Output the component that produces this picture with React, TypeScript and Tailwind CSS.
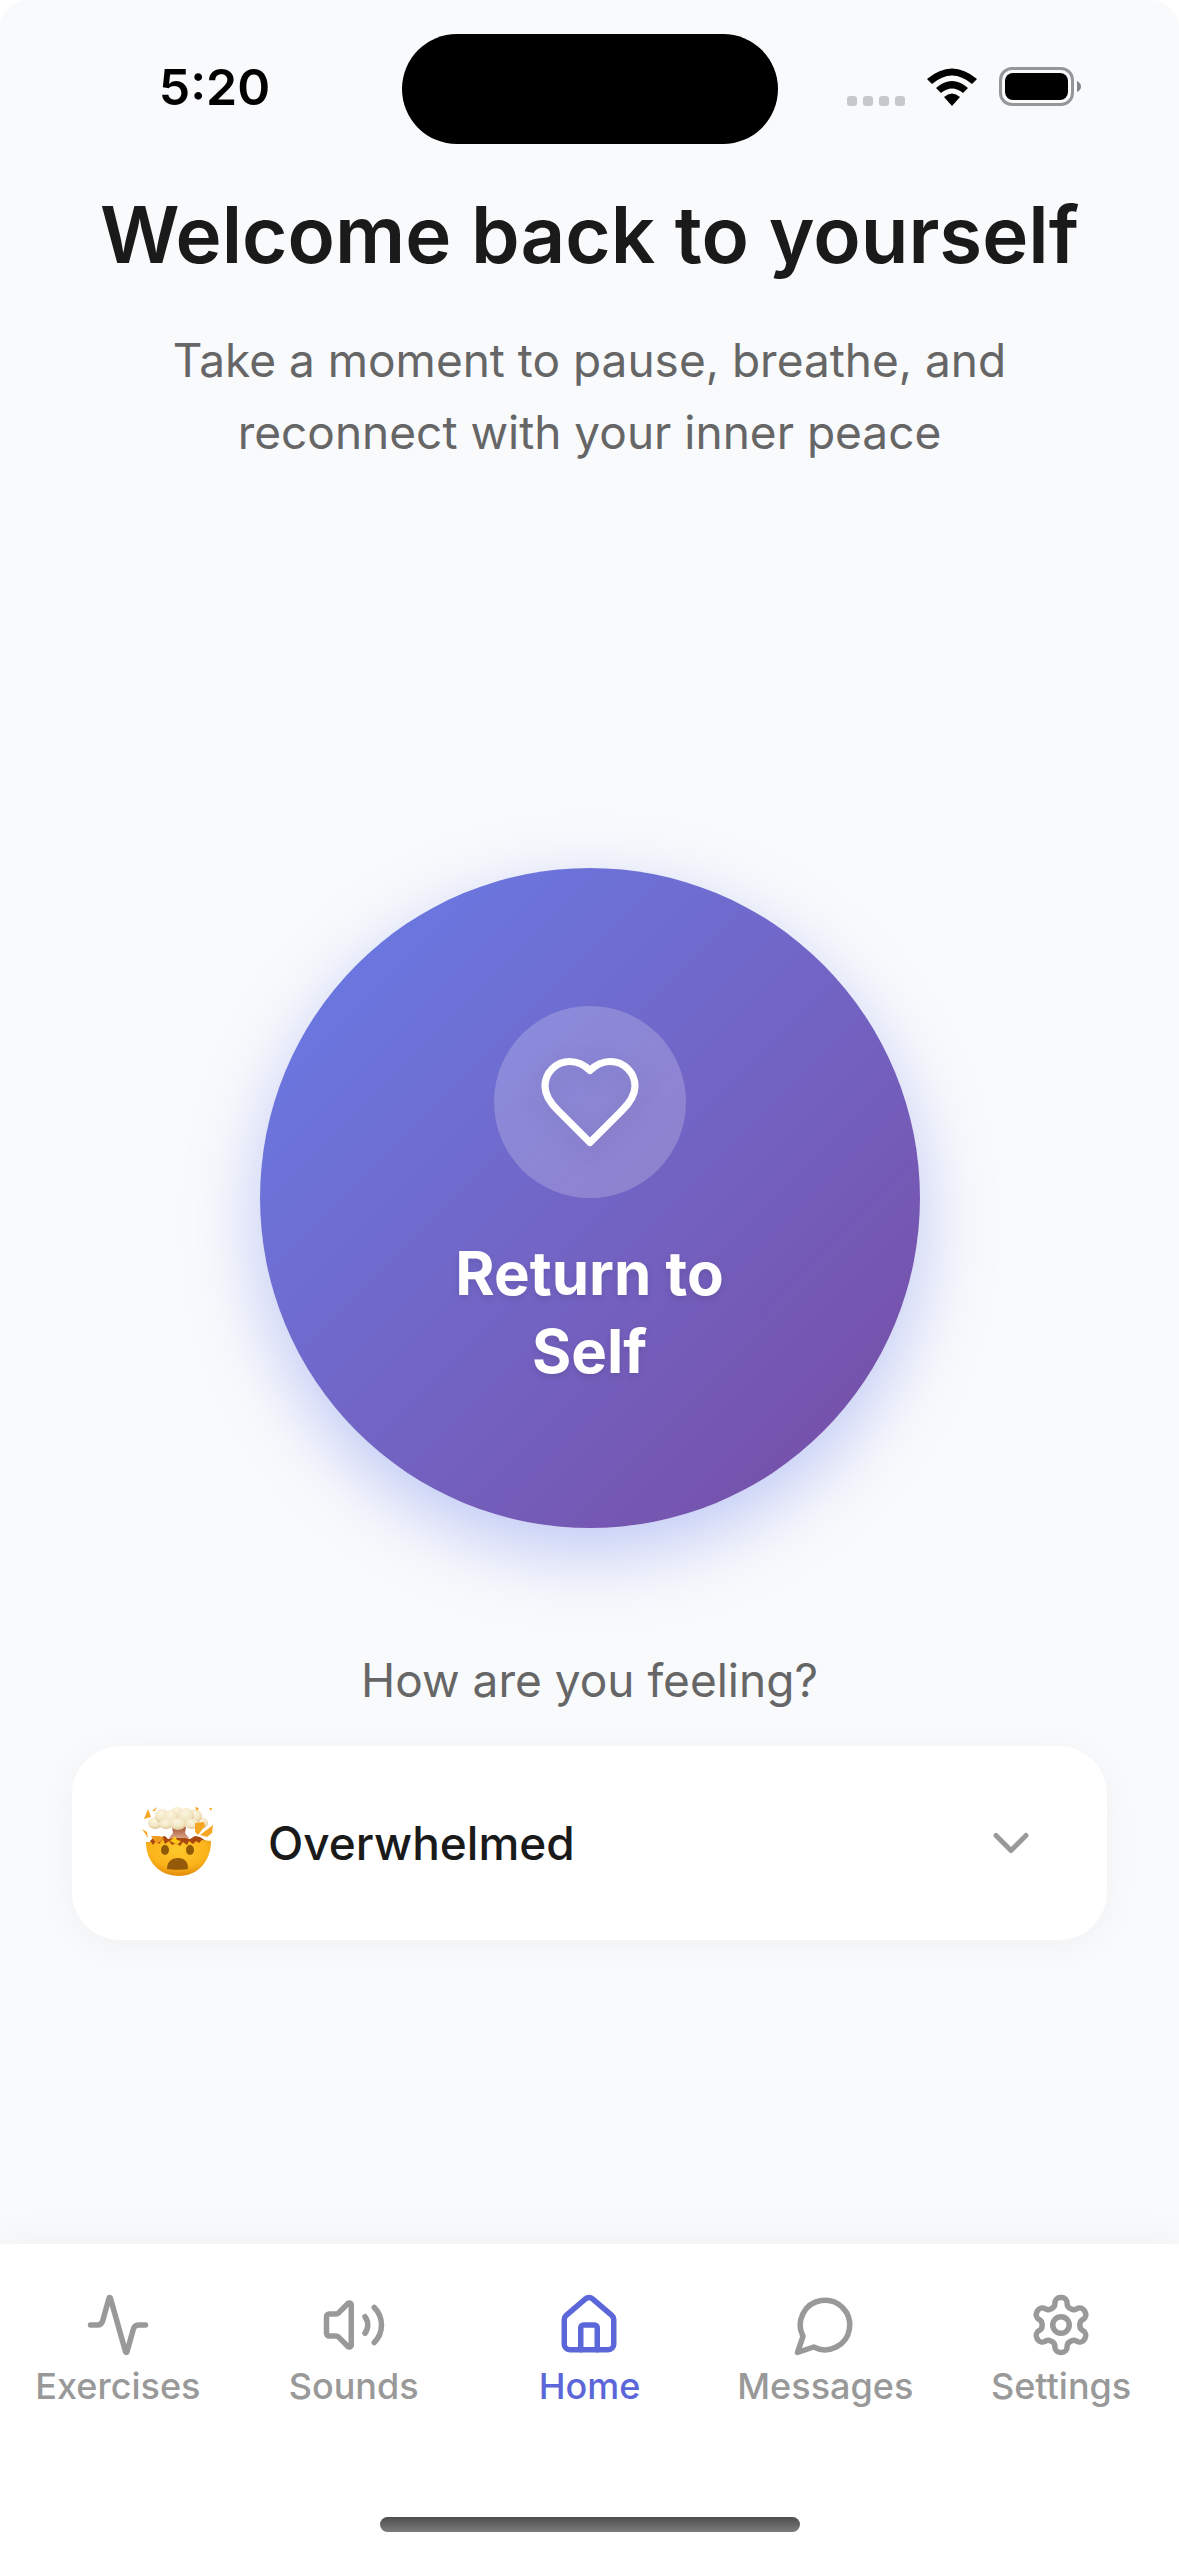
import { useState } from 'react';
import { Activity, ChevronDown, House, Volume2 } from 'lucide-react';

const strokeProps = {
  viewBox: '0 0 24 24',
  fill: 'none',
  stroke: 'currentColor',
  strokeLinecap: 'round',
  strokeLinejoin: 'round'
} as const;

const HeartIcon = () => (
  <svg {...strokeProps} strokeWidth="1.6" className="size-27 drop-shadow-[0_6px_12px_rgba(0,0,0,0.1)]" aria-hidden="true">
    <path d="M19 14c1.49-1.46 3-3.21 3-5.5A5.5 5.5 0 0 0 16.5 3c-1.76 0-3 .5-4.5 2-1.5-1.5-2.74-2-4.5-2A5.5 5.5 0 0 0 2 8.5c0 2.3 1.5 4.05 3 5.5l7 7Z" />
  </svg>
);

const MessageIcon = ({ className }: { className?: string }) => (
  <svg {...strokeProps} strokeWidth="2" className={className} aria-hidden="true">
    <path d="M7.9 20A9 9 0 1 0 4 16.1L2 22Z" />
  </svg>
);

const SettingsIcon = ({ className }: { className?: string }) => (
  <svg {...strokeProps} strokeWidth="2" className={className} aria-hidden="true">
    <path d="M12.22 2h-.44a2 2 0 0 0-2 2v.18a2 2 0 0 1-1 1.73l-.43.25a2 2 0 0 1-2 0l-.15-.08a2 2 0 0 0-2.73.73l-.22.38a2 2 0 0 0 .73 2.73l.15.1a2 2 0 0 1 1 1.72v.51a2 2 0 0 1-1 1.74l-.15.09a2 2 0 0 0-.73 2.73l.22.38a2 2 0 0 0 2.73.73l.15-.08a2 2 0 0 1 2 0l.43.25a2 2 0 0 1 1 1.73V20a2 2 0 0 0 2 2h.44a2 2 0 0 0 2-2v-.18a2 2 0 0 1 1-1.73l.43-.25a2 2 0 0 1 2 0l.15.08a2 2 0 0 0 2.73-.73l.22-.39a2 2 0 0 0-.73-2.73l-.15-.08a2 2 0 0 1-1-1.74v-.5a2 2 0 0 1 1-1.74l.15-.09a2 2 0 0 0 .73-2.73l-.22-.38a2 2 0 0 0-2.73-.73l-.15.08a2 2 0 0 1-2 0l-.43-.25a2 2 0 0 1-1-1.73V4a2 2 0 0 0-2-2z" />
    <circle cx="12" cy="12" r="3" />
  </svg>
);

const ExplodingHead = () => (
  <svg viewBox="0 0 72 72" className="size-18" aria-hidden="true">
    <defs>
      <radialGradient id="face" cx="0.5" cy="0.3" r="0.75">
        <stop offset="0" stopColor="#fdc92b" />
        <stop offset="0.6" stopColor="#fbb31a" />
        <stop offset="1" stopColor="#dd840a" />
      </radialGradient>
      <radialGradient id="puff" cx="0.45" cy="0.3" r="0.75">
        <stop offset="0" stopColor="#fcf6e2" />
        <stop offset="0.6" stopColor="#f2e6c2" />
        <stop offset="1" stopColor="#d9ba8a" />
      </radialGradient>
      <linearGradient id="stem" x1="0" y1="0" x2="0" y2="1">
        <stop offset="0" stopColor="#a85335" />
        <stop offset="1" stopColor="#d8a386" />
      </linearGradient>
    </defs>
    <path d="M30 20h14l-1 6 4 5H27l4-5z" fill="url(#stem)" />
    <path d="M8 34l5-5 6 1 4-1 3 3 4-1h14l4 1 5-3 5 1 6 4-3 5H10z" fill="#a9480f" />
    <path d="M4 35h5l2 3 3-4 3 3 4-5 2 5 4-3 3 4 4-2 4 3 3-4 4 3 2-4 4 3 3-3 3 2 3-3 9 1c0 20-13 35-32 35S4 55 4 35z" fill="url(#face)" />
    <path d="M9 29h8l5 2-4 4-4 1z" fill="#ef9b1d" />
    <path d="M33 29l2 4 4 1-3 3-4-1-4-2z" fill="#ffc61a" />
    <g fill="url(#puff)">
      <ellipse cx="13" cy="16" rx="7" ry="6" />
      <ellipse cx="59" cy="16" rx="7" ry="6" />
      <circle cx="20" cy="9" r="7" />
      <circle cx="53" cy="9" r="7" />
      <circle cx="35" cy="6" r="6" />
      <circle cx="29" cy="10" r="7" />
      <circle cx="44" cy="9" r="8" />
      <ellipse cx="24" cy="17" rx="7" ry="5" />
      <ellipse cx="50" cy="17" rx="7" ry="5" />
      <ellipse cx="36" cy="17" rx="8" ry="6" />
    </g>
    <g fill="#f5a623">
      <path d="M6 2l3 8-7 2z" />
      <path d="M10 4l5-4-2 4z" />
      <path d="M53 0l4 1-2 3z" />
      <path d="M67 1l3 0-1 3z" />
      <path d="M0 22l5 3 1 6z" />
      <path d="M53 16l9-1 1 4-7 9-3-3z" />
      <path d="M71 18l-1 8-5 4-7-2z" />
    </g>
    <ellipse cx="23" cy="43" rx="4" ry="5" fill="#8f5a06" />
    <ellipse cx="48" cy="43" rx="4" ry="5" fill="#8f5a06" />
    <path d="M25 62c0-7 4-11 11-11s10 4 10 11c-3 1-18 1-21 0z" fill="#95590a" />
  </svg>
);

const StatusBar = () => (
  <div className="grid grid-cols-3 items-center pt-[34px]">
    <div className="pb-1 pl-9 text-center text-[50px]/[60px] font-semibold text-black">5:20</div>
    <div className="mx-auto h-[110px] w-94 rounded-full bg-black" />
    <div className="flex items-center justify-end gap-[22px] pr-[98px] pb-1">
      <svg viewBox="0 0 58 40" className="h-10 w-[58px]" fill="#c7c8ca" aria-hidden="true">
        <rect x="0" y="29" width="10" height="10" rx="3" />
        <rect x="16" y="29" width="10" height="10" rx="3" />
        <rect x="32" y="29" width="10" height="10" rx="3" />
        <rect x="48" y="29" width="10" height="10" rx="3" />
      </svg>
      <svg viewBox="0 0 50 40" className="h-10 w-[50px]" aria-hidden="true">
        <path d="M0 12Q25 -9 50 12L45 17Q25 0 5 17Z" />
        <path d="M9 21Q25 7 41 21L36 26Q25 17 14 26Z" />
        <path d="M17 30Q25 23 33 30L25 39Z" />
      </svg>
      <svg viewBox="0 0 82 40" className="h-10 w-[82px]" aria-hidden="true">
        <rect x="1.5" y="1.5" width="72" height="36" rx="11.5" fill="none" stroke="#959697" strokeWidth="3" />
        <rect x="6" y="6" width="63" height="27" rx="8" />
        <path d="M78 14Q82 16 82 19.5T78 25Z" fill="#848586" />
      </svg>
    </div>
  </div>
);

const tabs = [
  { name: 'Exercises', Icon: Activity },
  { name: 'Sounds', Icon: Volume2 },
  { name: 'Home', Icon: House },
  { name: 'Messages', Icon: MessageIcon },
  { name: 'Settings', Icon: SettingsIcon }
];

const App = () => {
  const [activeTab, setActiveTab] = useState('Home');

  return (
    <div className="bg-white">
      <div className="flex min-h-screen flex-col rounded-t-[28px] bg-[#f9fafc] font-['Inter',sans-serif]">
        <StatusBar />

        <header className="px-18 pt-[42px] text-center">
          <h1 className="text-[78px]/[98px] font-semibold text-[#1a1a1a]">Welcome back to yourself</h1>
          <p className="mx-auto mt-10 max-w-[900px] text-[46px]/[72px] text-[#666666]">
            Take a moment to pause, breathe, and reconnect with your inner peace
          </p>
        </header>

        <main className="flex flex-1 flex-col items-center justify-center px-18 pt-24">
          <button className="flex size-[660px] flex-col items-center justify-center rounded-full bg-linear-135 from-[#667eea] to-[#764ba2] shadow-[0_24px_72px_rgba(102,126,234,0.4)] text-white">
            <span className="flex size-48 items-center justify-center rounded-full bg-white/20">
              <HeartIcon />
            </span>
            <span className="mt-9 w-80 text-[60px]/[78px] font-bold text-shadow-[0_3px_6px_rgba(0,0,0,0.1)]">Return to Self</span>
          </button>

          <p id="feeling" className="mt-[116px] text-[46px]/[72px] text-[#666666]">How are you feeling?</p>
          <button
            aria-labelledby="feeling mood"
            className="mt-[30px] flex w-full items-center rounded-[48px] bg-white px-[70px] py-[60px] shadow-[0_6px_36px_rgba(0,0,0,0.04)]"
          >
            <ExplodingHead />
            <span id="mood" className="ml-[54px] flex-1 text-left text-[46px]/[74px] font-medium text-[#1a1a1a]">Overwhelmed</span>
            <ChevronDown className="-mr-1 size-15 text-[#999999]" />
          </button>
        </main>

        <nav className="bg-white pt-12 shadow-[0_-6px_36px_rgba(0,0,0,0.04)]">
          <div className="grid grid-cols-5">
            {tabs.map(({ name, Icon }) => (
              <button
                key={name}
                onClick={() => setActiveTab(name)}
                className={`flex flex-col items-center gap-1.5 text-[36px]/[44px] font-medium ${
                  activeTab === name ? 'text-[#5b67d8]' : 'text-[#999999]'
                }`}
              >
                <Icon className="size-[66px]" />
                {name}
              </button>
            ))}
          </div>
          <div className="mx-auto mt-[109px] mb-6 h-[15px] w-105 rounded-full bg-linear-to-b from-[#4e4e4e] to-[#7c7c7c]" />
        </nav>
      </div>
    </div>
  );
};

export default App;
